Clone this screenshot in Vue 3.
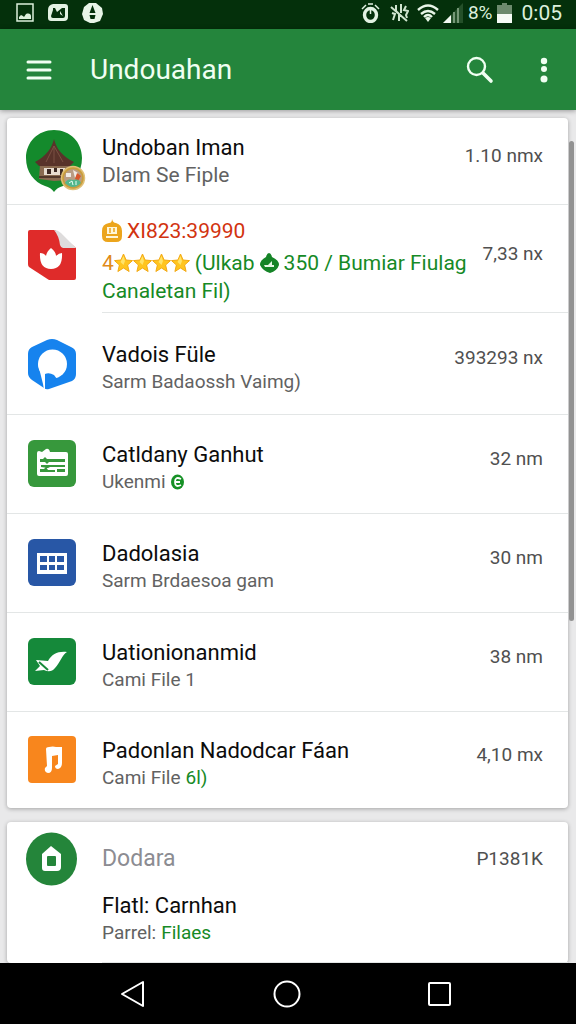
<template>
  <div class="screen">
    <div class="status-bar">
      <svg class="status-icon" width="18" height="20" viewBox="0 0 18 20">
        <rect x="1" y="1" width="16" height="17" fill="none" stroke="#dcefdc" stroke-width="1.5" />
        <path d="M3 16v-2l2-2 2 1 1 1 2-3c3-1 5 0 5 2v3z" fill="#dcefdc" />
      </svg>
      <svg class="status-icon" width="20" height="18" viewBox="0 0 20 18">
        <path d="M5 0h12q3 0 3 3v10q0 4-4 4H3q-3 0-3-3V6q0-5 5-6z" fill="#e2f1e2" />
        <path d="M5 4l2 0 2 4 5-4h3v8q0 2-2 2H5q-2 0-2-2l2-6z" fill="#04300b" />
        <path d="M12 7l3 5-3-2z" fill="#e2f1e2" />
      </svg>
      <svg class="status-icon" width="21" height="20" viewBox="0 0 21 20">
        <path d="M7 0h7l6 5 1 6-3 7-6 2H8l-6-3-2-6 2-7z" fill="#e8f5e8" />
        <path d="M10.500 2l3 8h-6z" fill="#04300b" />
        <path d="M7.500 12h6l-1 4h-4z" fill="#04300b" />
      </svg>
      <span class="spacer"></span>
      <svg class="status-icon alarm" width="19" height="20" viewBox="0 0 19 20">
        <ellipse cx="9.500" cy="12" rx="6" ry="6.500" fill="none" stroke="#e2f1e2" stroke-width="3.400" />
        <path d="M9.500 6v5M1 6l4-4M14 2l4 4M7 1h5" fill="none" stroke="#e2f1e2" stroke-width="1.500" />
      </svg>
      <svg class="status-icon mute" width="19" height="20" viewBox="0 0 19 20">
        <path d="M1 4l16 14M2 10l3 1-2 6M6 2v6l3 3v7M11 1v9M16 3l-2 4 4 1-2 4 1 3" fill="none" stroke="#cfe5cf" stroke-width="2" />
      </svg>
      <svg class="status-icon wifi" width="22" height="18" viewBox="0 0 22 18">
        <path d="M1 6q10-9 20 0M4 10q7-6 14 0M7 13q4-4 8 0" fill="none" stroke="#e8f5e8" stroke-width="2.400" />
        <path d="M8 14q3-2 6 0l-3 4z" fill="#e8f5e8" />
      </svg>
      <svg class="status-icon" width="20" height="20" viewBox="0 0 20 20">
        <path d="M0 20L20 0v20z" fill="#245029" />
        <path d="M0 20l8-8v8z" fill="#f2f9f2" />
        <path d="M11 9v11M15 5v15" stroke="#8fae90" stroke-width="1.500" />
      </svg>
      <span class="battery-level">8%</span>
      <svg class="status-icon" width="15" height="20" viewBox="0 0 15 20">
        <path d="M5 0h5v2h5v9H0V2h5z" fill="#6c8a6d" />
        <path d="M0 11h15v9H0z" fill="#f6fbf6" />
      </svg>
      <span class="clock">0:05</span>
    </div>

    <header class="app-bar">
      <button class="icon-button" aria-label="Menu">
        <svg width="26" height="20" viewBox="0 0 26 20">
          <path d="M2 2h22M2 10h22M2 18h22" stroke="#f0fff2" stroke-width="3" stroke-linecap="round" />
        </svg>
      </button>
      <h1>Undouahan</h1>
      <button class="icon-button" aria-label="Search">
        <svg width="28" height="28" viewBox="0 0 28 28">
          <circle cx="10.500" cy="10.500" r="8.500" fill="none" stroke="#f0fff2" stroke-width="2.400" />
          <path d="M17 17l8 8" stroke="#f0fff2" stroke-width="3.600" stroke-linecap="round" />
        </svg>
      </button>
      <button class="icon-button more" aria-label="More options">
        <svg width="8" height="26" viewBox="0 0 8 26">
          <circle cx="4" cy="4" r="3.200" fill="#f0fff2" />
          <circle cx="4" cy="12" r="3" fill="#f0fff2" />
          <circle cx="4" cy="22" r="3.500" fill="#f0fff2" />
        </svg>
      </button>
    </header>

    <main class="content">
      <section class="card">
        <div class="row head">
          <div class="icon">
            <svg width="60" height="64" viewBox="0 0 60 64">
              <path d="M28 1C44 1 56 13 56 29c0 15-9 24-19 28-4 1-7 3-9 6-2-3-5-5-9-6C8 53 0 43 0 29 0 13 12 1 28 1z" fill="#148a2c" />
              <path d="M14 35h30v16l-16 1-15-2z" fill="#8a6a50" />
              <path d="M28 10c2 9 8 17 20 23l-4 4H13l-4-4c11-6 17-14 19-23z" fill="#59332a" />
              <path d="M28 17l-8 16M28 17v17M28 17l9 16" stroke="#7b5143" stroke-width="1" fill="none" />
              <path d="M18 39h21v7H18z" fill="#e8dccf" />
              <path d="M21 40h4v5h-4zM28 39h3v4h-3zM34 40h3v6h-3z" fill="#3c2923" />
              <path d="M13 48h26" stroke="#52372a" stroke-width="2" />
              <circle cx="47" cy="49" r="11.500" fill="#c99d3c" stroke="#e0c078" stroke-width="1.500" />
              <circle cx="47" cy="49" r="9" fill="#b99c83" />
              <path d="M40 44h5v4h-5zM47 41l5 3-3 5z" fill="#f1ece5" />
              <path d="M51 44l4 3-3 5-3-2z" fill="#d9572b" />
              <path d="M39 54q2-5 8-3 6-2 8 3-8 8-16 0z" fill="#53b68c" />
              <path d="M43 54l3-2 1 4M50 52v4" stroke="#e8fff4" stroke-width="1" fill="none" />
            </svg>
          </div>
          <div class="texts">
            <p class="title">Undoban Iman</p>
            <p class="subtitle">Dlam Se Fiple</p>
          </div>
          <span class="value">1.10 nmx</span>
        </div>

        <div class="row promo">
          <div class="icon">
            <svg width="50" height="52" viewBox="0 0 50 52">
              <path d="M3 1h25l21 18v30q0 2-2 2H22L2 38q-1-1-1-3V3q0-2 2-2z" fill="#df2b2a" />
              <path d="M27 1q4 0 7 3l15 15H36q-2 0-3-3-1-9-6-15z" fill="#dedcdc" />
              <path d="M24 19q5 4 5 8 3-3 6-3 1 16-11 16T13 24q4 0 6 3 1-5 5-8z" fill="#fff" />
            </svg>
          </div>
          <div class="texts">
            <p class="offer">
              <svg width="20" height="24" viewBox="0 0 20 24">
                <path d="M7 4q3 0 3-4 1 4 4 4 6 2 6 8v5q0 6-6 6H6q-6 0-6-6v-5q0-7 7-8z" fill="#eca51c" />
                <path d="M5 8h10v7H5zM4 17h12v2H4z" fill="#fff6d8" />
                <path d="M8 9v5M12 9v4" stroke="#eca51c" stroke-width="1.500" />
              </svg>
              XI823:39990
            </p>
            <div class="rating">
              <span class="score">4</span>
              <svg v-for="n in 4" :key="n" width="19" height="20" viewBox="0 0 19 20">
                <path d="M9.500 1l2.600 6 6.400.600-4.900 4.400 1.500 6.500-5.600-3.500-5.600 3.500 1.500-6.500L.500 7.600 6.900 7z" fill="#ffc51f" stroke="#f3a914" stroke-width="1" stroke-linejoin="round" />
                <path d="M9.500 3l1.500 5-1.500 4-3-3z" fill="#ffe36a" />
              </svg>
              <span class="store">(Ulkab</span>
              <svg width="19" height="20" viewBox="0 0 19 20">
                <path d="M9 0q2 0 3 4 7 3 7 8-2 6-9 8-7-2-10-8 0-5 6-8 1-4 3-4z" fill="#158427" />
                <path d="M4 12h4l4-4v4h2v2H5z" fill="#e6f7e6" />
              </svg>
              <span class="store">350 / Bumiar Fiulag</span>
            </div>
            <p class="store-line">Canaletan Fil)</p>
          </div>
          <span class="value">7,33 nx</span>
        </div>

        <div v-for="app in apps" :key="app.title" class="row" :class="{ tall: app.icon === 'paypoint' }">
          <div class="icon">
            <svg v-if="app.icon === 'paypoint'" width="50" height="52" viewBox="0 0 50 52">
              <path d="M20 2q5-2 10 0l14 7q5 2 5 7v20q0 5-4 7L22 51q-3 1-5-1L5 42q-4-3-4-7V16q0-5 4-7z" fill="#1683ee" />
              <circle cx="25.500" cy="26" r="14.500" fill="#fff" />
              <path d="M11 26l5 20 1 6h1V35l10-4z" fill="#fff" />
              <path d="M18 36q4-2 9 1l3 4-12 9z" fill="#1683ee" />
            </svg>
            <svg v-else width="50" height="50" viewBox="0 0 50 50">
              <rect x="1" y="1" width="48" height="47" :rx="app.icon === 'music' ? 4 : 6" :fill="app.color" />
              <template v-if="app.icon === 'card'">
                <path d="M10 14q0-2 2-2l3 1 4-3q3-1 4 3h16q2 0 2 2v20q0 2-2 2H12q-2 0-2-2z" fill="#fff" />
                <path d="M13 20h3l2-2 2 2h18v3H22l-2 2-2-2h-5zM14 26h24v2H23l-2 1-7-1zM13 30h4l2-2 2 3h7v2H13zM30 30h8v3h-8z" fill="#37983c" />
              </template>
              <template v-else-if="app.icon === 'grid'">
                <rect x="10" y="15" width="30" height="21" fill="#fff" />
                <path d="M13 18h7v6h-7zM22 18h6v6h-6zM30 18h7v6h-7zM13 27h7v5h-7zM22 27h6v5h-6zM30 27h7v5h-7z" fill="#2857a6" />
              </template>
              <template v-else-if="app.icon === 'bird'">
                <path d="M9 23l12 1c4-7 10-10 19-9-5 3-7 11-12 16-3 4-7 4-11 2l-9 1 5-5z" fill="#fff" />
                <path d="M12 25l9 8" stroke="#15893a" stroke-width="2" />
              </template>
              <template v-else>
                <path d="M19 14q0-2 3-2 4-1 7 0h6v16q0 5-4 6-3 0-3-3l3-2v-9l-6 1v12q0 5-4 5-4-1-3-5l2-2z" fill="#fff" />
              </template>
            </svg>
          </div>
          <div class="texts">
            <p class="title">{{ app.title }}</p>
            <p class="subtitle">
              {{ app.subtitle }}
              <span v-if="app.note" class="note">{{ app.note }}</span>
              <svg v-if="app.badge" class="badge" width="13" height="16" viewBox="0 0 13 16">
                <ellipse cx="6.500" cy="8" rx="6.500" ry="7.500" fill="#169126" />
                <path d="M10 5q-6-3-6 3t6 3M4 8h5" fill="none" stroke="#fff" stroke-width="1.800" />
              </svg>
            </p>
          </div>
          <span class="value">{{ app.value }}</span>
        </div>
        <span class="scroll-thumb"></span>
      </section>

      <section class="card">
        <div class="row section-head">
          <div class="icon">
            <svg width="52" height="54" viewBox="0 0 52 54">
              <ellipse cx="25.500" cy="27" rx="25.500" ry="26.500" fill="#24853a" />
              <path d="M25 14l10 8v13q0 4-4 4H19q-3 0-3-3V22z" fill="#fff" />
              <rect x="21" y="24" width="9" height="10" rx="1" fill="#24853a" />
            </svg>
          </div>
          <p class="section-title">Dodara</p>
          <span class="value">P1381K</span>
        </div>
        <div class="section-item">
          <p class="title">Flatl: Carnhan</p>
          <p class="subtitle">Parrel: <a href="#">Filaes</a></p>
        </div>
      </section>
    </main>

    <nav class="nav-bar">
      <button aria-label="Back">
        <svg width="28" height="30" viewBox="0 0 28 30">
          <path d="M24 3v24L3 15z" fill="none" stroke="#fff" stroke-width="2" stroke-linejoin="round" />
        </svg>
      </button>
      <button aria-label="Home">
        <svg width="28" height="28" viewBox="0 0 28 28">
          <circle cx="14" cy="14" r="12.500" fill="none" stroke="#fff" stroke-width="2" />
        </svg>
      </button>
      <button aria-label="Recent apps">
        <svg width="26" height="28" viewBox="0 0 26 28">
          <rect x="2" y="3" width="21" height="22" rx="1" fill="none" stroke="#fff" stroke-width="2" />
        </svg>
      </button>
    </nav>
  </div>
</template>

<script setup>
const apps = [
  { icon: 'paypoint', title: 'Vadois Füle', subtitle: 'Sarm Badaossh Vaimg)', value: '393293 nx' },
  { icon: 'card', color: '#37983c', title: 'Catldany Ganhut', subtitle: 'Ukenmi', badge: true, value: '32 nm' },
  { icon: 'grid', color: '#2857a6', title: 'Dadolasia', subtitle: 'Sarm Brdaesoa gam', value: '30 nm' },
  { icon: 'bird', color: '#15893a', title: 'Uationionanmid', subtitle: 'Cami File 1', value: '38 nm' },
  { icon: 'music', color: '#f8861d', title: 'Padonlan Nadodcar Fáan', subtitle: 'Cami File', note: '6l)', value: '4,10 mx' },
];
</script>

<style>
body { margin: 0; background: #e9e9ea; }
</style>

<style scoped>
.screen { display: flex; flex-direction: column; height: 100vh; overflow: hidden; font-family: Roboto, "Liberation Sans", sans-serif; color: #0c0c0c; background: #e9e9ea; }
p, h1 { margin: 0; font-weight: 400; }
button { display: flex; align-items: center; justify-content: center; padding: 0; border: 0; background: none; cursor: pointer; }
svg { display: block; flex: none; }

.status-bar { display: flex; align-items: center; flex: none; height: 29px; padding: 0 14px 4px 16px; box-sizing: border-box; background: #04300b; color: #dcefdc; }
.status-icon { margin-right: 14px; }
.spacer { flex: 1; }
.status-icon.alarm { margin-right: 10px; }
.status-icon.mute { margin-right: 8px; }
.status-icon.wifi { margin-right: 4px; }
.status-icon.wifi ~ .status-icon { margin-right: 5px; }
.battery-level { margin-right: 4px; font-size: 19px; }
.clock { margin-left: 5px; font-size: 21px; }

.app-bar { display: flex; align-items: center; flex: none; height: 81px; padding: 0 28px 0 26px; box-sizing: border-box; background: #24853c; box-shadow: 0 1px 5px rgba(0, 0, 0, .35); z-index: 1; }
.app-bar h1 { flex: 1; margin-left: 38px; font-size: 28px; line-height: 36px; color: #f0fff2; }
.icon-button.more { margin-left: 46px; }

.content { flex: 1; min-height: 0; padding: 8px 8px 0 7px; overflow: hidden; }
.card { position: relative; margin-bottom: 14px; border-radius: 4px; background: #fff; box-shadow: 0 1px 4px rgba(0, 0, 0, .3); }
.row { display: flex; align-items: center; min-height: 98px; padding: 0 25px 0 19px; border-bottom: 1px solid #e3e6e6; }
.row.head { min-height: 86px; }
.row.promo { min-height: 108px; border-bottom: 0; background: linear-gradient(#e3e6e6, #e3e6e6) 95px 100% / 100% 1px no-repeat; }
.row.tall { min-height: 101px; }
.row:last-of-type { min-height: 96px; border-bottom: 0; }
.icon { flex: none; width: 76px; }
.row:not(.head) .icon { padding-left: 1px; width: 75px; }
.row.promo .icon { padding-bottom: 8px; }
.texts { flex: 1; min-width: 0; padding-top: 8px; }
.head .texts { padding-top: 0; }
.promo .texts { padding-top: 4px; }
.title { font-size: 22px; line-height: 28px; }
.subtitle { display: flex; align-items: center; gap: 5px; font-size: 19px; line-height: 26px; color: #626262; }
.head .subtitle { font-size: 21px; }
.note, .subtitle a { color: #168a26; text-decoration: none; }
.value { flex: none; padding-bottom: 11px; font-size: 19px; line-height: 26px; color: #505050; }

.offer { display: flex; align-items: center; gap: 5px; font-size: 21px; line-height: 28px; color: #d2330f; }
.rating, .store-line { font-size: 21px; line-height: 28px; color: #168a26; }
.rating { display: flex; align-items: center; margin-top: 4px; white-space: nowrap; }
.store { margin: 0 5px; }
.store:last-child { margin-right: 0; }
.score { color: #e08a1a; }

.scroll-thumb { position: absolute; top: 23px; right: -6px; width: 5px; height: 480px; border-radius: 3px; background: #929292; }

.row.section-head { min-height: 66px; padding-top: 4px; border-bottom: 0; }
.section-head .icon { padding-left: 0; width: 76px; }
.row.section-head .icon { padding-left: 0; width: 76px; }
.section-head .value { padding-bottom: 0; }
.section-title { flex: 1; font-size: 23px; line-height: 28px; color: #8c8c92; }
.section-item { margin-left: 95px; padding-bottom: 16px; border-bottom: 1px solid #e3e6e6; }

.nav-bar { display: flex; align-items: center; justify-content: center; gap: 126px; flex: none; height: 61px; padding-right: 4px; background: #000; z-index: 1; }
</style>
